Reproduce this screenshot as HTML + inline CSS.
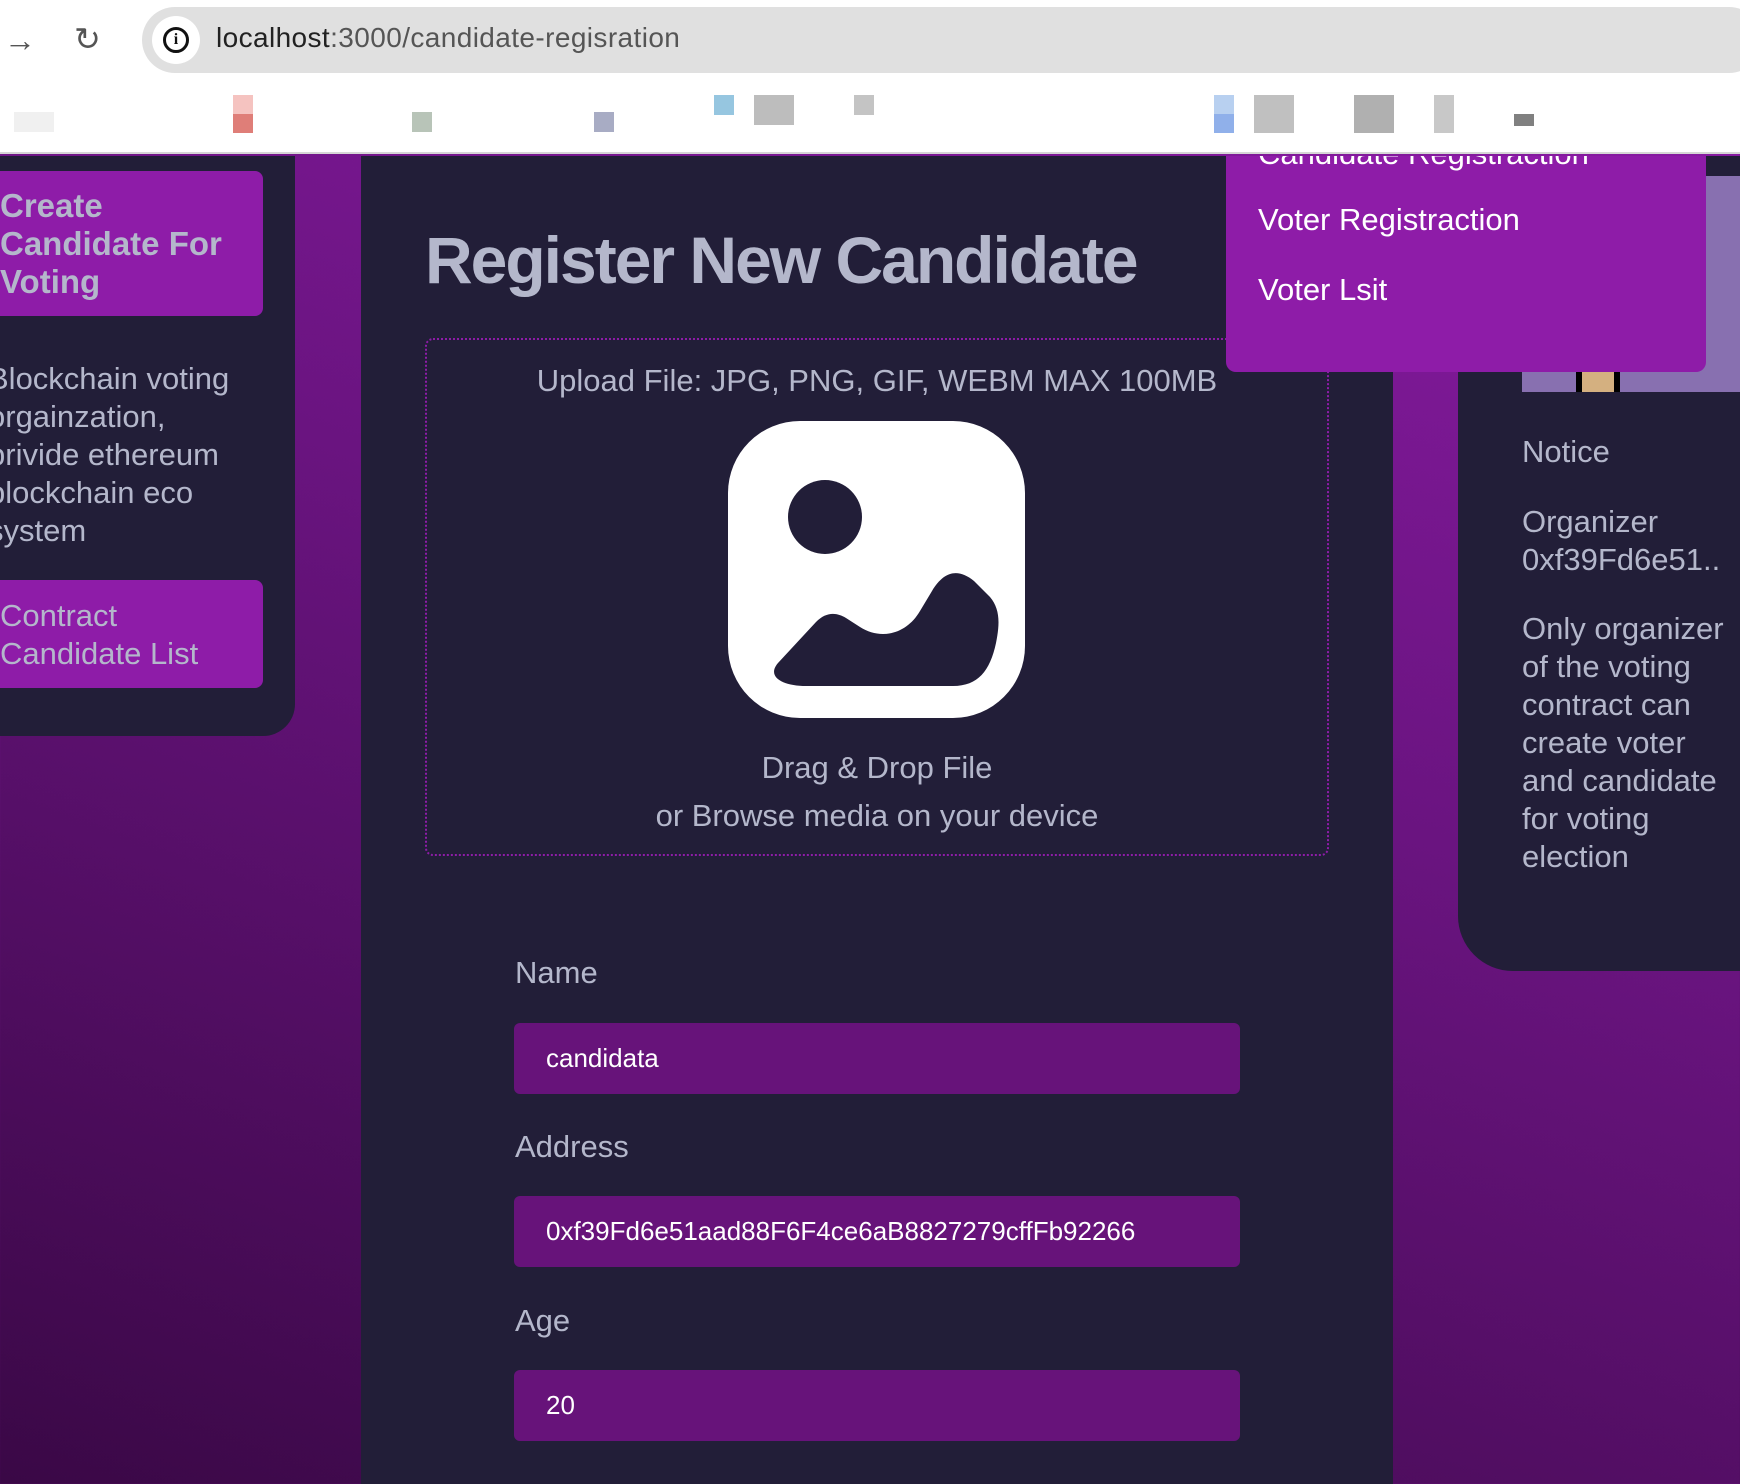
<!DOCTYPE html>
<html><head><meta charset="utf-8"><style>
*{margin:0;padding:0;box-sizing:border-box}
body{width:1740px;height:1484px;overflow:hidden;position:relative;font-family:"Liberation Sans",sans-serif;background:linear-gradient(200deg,#8d1ca8 0%,#6a1480 45%,#3a0846 100%)}
.a{position:absolute}
.chrome{left:0;top:0;width:1740px;height:154px;background:#fff;border-bottom:2px solid #d6d6d6}
.url{left:142px;top:7px;width:1620px;height:66px;background:#e0e0e0;border-radius:33px}
.dark{background:#221e38}
.g{color:#b4b7cb}
.btn{background:#8e1ca8;border-radius:8px}
.lbl{font-size:31px;color:#b4b7cb}
.inp{left:514px;width:726px;height:71px;background:#67137a;border-radius:6px;color:#fff;font-size:26px;padding-left:32px;line-height:71px}
.bm{height:20px;top:112px}
</style></head><body>
<div class="a chrome"></div>
<div class="a" style="left:4px;top:22px;font-size:32px;color:#555">→</div>
<div class="a" style="left:74px;top:20px;font-size:32px;color:#555">↻</div>
<div class="a url"></div>
<div class="a" style="left:152px;top:16px;width:48px;height:48px;border-radius:24px;background:#fff"></div>
<div class="a" style="left:163px;top:27px;width:26px;height:26px;border:3px solid #111;border-radius:13px;font:bold 16px 'Liberation Serif',serif;text-align:center;line-height:20px;color:#111">i</div>
<div class="a" style="left:216px;top:22px;font-size:28px;color:#222;letter-spacing:0.4px">localhost<span style="color:#555">:3000/candidate-regisration</span></div>
<div class="a bm" style="left:14px;width:40px;background:#f0f0f0"></div>
<div class="a bm" style="left:233px;top:95px;width:20px;height:38px;background:linear-gradient(#f5c3c0 50%,#df7e78 50%)"></div>
<div class="a bm" style="left:412px;width:20px;background:#b8c4b8"></div>
<div class="a bm" style="left:594px;width:20px;background:#a8acc4"></div>
<div class="a bm" style="left:714px;top:95px;width:20px;height:20px;background:#96c6e0"></div>
<div class="a bm" style="left:754px;top:95px;width:40px;height:30px;background:#bdbdbd"></div>
<div class="a bm" style="left:854px;top:95px;width:20px;height:20px;background:#c4c4c4"></div>
<div class="a bm" style="left:1214px;top:95px;width:20px;height:38px;background:linear-gradient(#b8d0f0 50%,#90b0ea 50%)"></div>
<div class="a bm" style="left:1254px;top:95px;width:40px;height:38px;background:#c0c0c0"></div>
<div class="a bm" style="left:1354px;top:95px;width:40px;height:38px;background:#b0b0b0"></div>
<div class="a bm" style="left:1434px;top:95px;width:20px;height:38px;background:#c8c8c8"></div>
<div class="a bm" style="left:1514px;top:114px;width:20px;height:12px;background:#808080"></div>

<!-- left panel -->
<div class="a dark" style="left:0;top:156px;width:295px;height:580px;border-bottom-right-radius:32px"></div>
<div class="a btn" style="left:0;top:171px;width:263px;height:145px;border-top-left-radius:0;border-bottom-left-radius:0"></div>
<div class="a g" style="left:0;top:187px;font-size:33px;font-weight:bold;line-height:38px;width:260px">Create Candidate For Voting</div>
<div class="a g" style="left:-12px;top:360px;font-size:31px;line-height:38px;width:250px">Blockchain voting orgainzation, privide ethereum blockchain eco system</div>
<div class="a btn" style="left:0;top:580px;width:263px;height:108px;border-top-left-radius:0;border-bottom-left-radius:0"></div>
<div class="a g" style="left:0;top:597px;font-size:31px;line-height:38px">Contract<br>Candidate List</div>

<!-- middle -->
<div class="a dark" style="left:361px;top:156px;width:1032px;height:1328px"></div>
<div class="a g" style="left:425px;top:222px;font-size:66px;font-weight:bold;letter-spacing:-2px">Register New Candidate</div>
<div class="a" style="left:425px;top:338px;width:904px;height:518px;border:2px dotted #8e1ca8;border-radius:8px"></div>
<div class="a lbl" style="left:425px;width:904px;text-align:center;top:363px">Upload File: JPG, PNG, GIF, WEBM MAX 100MB</div>
<svg class="a" style="left:728px;top:421px" width="297" height="297" viewBox="0 0 297 297">
<rect width="297" height="297" rx="72" fill="#fff"/>
<circle cx="97" cy="96" r="37" fill="#221e38"/>
<path d="M50,242 L88,201 C98,191 108,191 118,197 L132,206 C152,219 178,214 192,190 L204,170 C216,150 230,147 246,160 L262,176 C272,188 272,202 268,222 C262,250 250,265 225,265 L78,265 C55,265 38,256 50,242 Z" fill="#221e38"/>
</svg>
<div class="a lbl" style="left:425px;width:904px;text-align:center;top:744px;line-height:48px">Drag &amp; Drop File<br>or Browse media on your device</div>
<div class="a lbl" style="left:515px;top:955px">Name</div>
<div class="a inp" style="top:1023px">candidata</div>
<div class="a lbl" style="left:515px;top:1129px">Address</div>
<div class="a inp" style="top:1196px">0xf39Fd6e51aad88F6F4ce6aB8827279cffFb92266</div>
<div class="a lbl" style="left:515px;top:1303px">Age</div>
<div class="a inp" style="top:1370px">20</div>

<!-- right panel -->
<div class="a dark" style="left:1458px;top:156px;width:290px;height:815px;border-bottom-left-radius:55px"></div>
<div class="a" style="left:1522px;top:176px;width:230px;height:216px;background:#8870b0"></div>
<div class="a" style="left:1576px;top:372px;width:44px;height:20px;background:#d4b080;border-left:6px solid #000;border-right:6px solid #000"></div>
<div class="a g" style="left:1522px;top:433px;font-size:31px;line-height:38px;width:220px">Notice</div>
<div class="a g" style="left:1522px;top:503px;font-size:31px;line-height:38px;width:230px;white-space:nowrap">Organizer<br>0xf39Fd6e51..</div>
<div class="a g" style="left:1522px;top:610px;font-size:31px;line-height:38px;width:218px">Only organizer of the voting contract can create voter and candidate for voting election</div>

<!-- dropdown -->
<div class="a" style="left:1226px;top:156px;width:480px;height:216px;background:#8e1ca8;border-radius:0 0 10px 10px;overflow:hidden">
<div class="a" style="left:32px;top:-20px;color:#fff;font-size:31px">Candidate Registraction</div>
<div class="a" style="left:32px;top:46px;color:#fff;font-size:31px">Voter Registraction</div>
<div class="a" style="left:32px;top:116px;color:#fff;font-size:31px">Voter Lsit</div>
</div>
</body></html>
